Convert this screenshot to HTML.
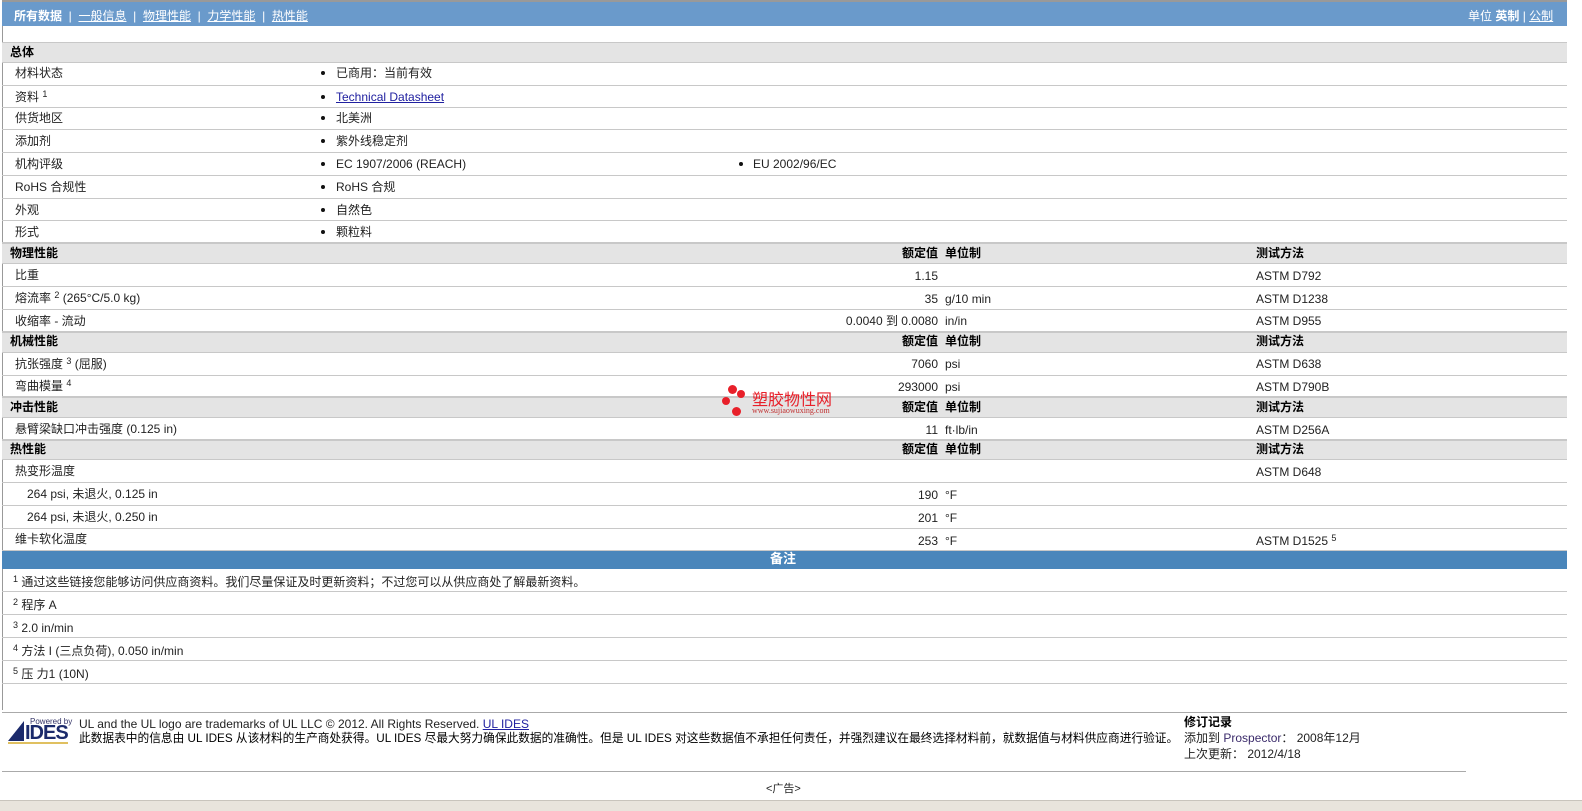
<!DOCTYPE html>
<html><head><meta charset="utf-8"><style>
*{margin:0;padding:0;box-sizing:border-box}
body{width:1582px;height:811px;background:#fff;font-family:"Liberation Sans","Noto Sans CJK SC",sans-serif;font-size:12px;color:#222;position:relative;overflow:hidden}
.a{position:absolute;white-space:nowrap}
.r{position:absolute;left:2px;width:1565px;border-bottom:1px solid #c8c8c8}
.g{background:#e4e4e4;border-top:1px solid #c8c8c8}
.b{font-weight:bold;color:#000}
.t{position:absolute;line-height:12px;white-space:nowrap}
sup{font-size:9px;position:relative;top:-4px;vertical-align:baseline;line-height:0}
a{color:#2020a0;text-decoration:underline}
.dot{position:absolute;width:4px;height:4px;border-radius:50%;background:#111}
</style></head><body>
<div class="a" style="left:2px;top:0;width:1565px;height:2px;background:#999"></div>
<div class="a" style="left:2px;top:2px;width:1565px;height:24px;background:#6a9acb"></div>
<div class="a" style="left:14px;top:7px;color:#fff;font-size:12px"><b>所有数据</b> &nbsp;| &nbsp;<u>一般信息</u> &nbsp;| &nbsp;<u>物理性能</u> &nbsp;| &nbsp;<u>力学性能</u> &nbsp;| &nbsp;<u>热性能</u></div>
<div class="a" style="left:1468px;top:7px;color:#fff">单位 <b>英制</b> | <u>公制</u></div>
<div class="a" style="left:2px;top:26px;width:1px;height:684px;background:#999"></div>

<div class="r g" style="top:42px;height:21px"></div><div class="t b" style="left:10px;top:46px">总体</div>

<div class="r" style="top:63px;height:23px"></div><div class="t" style="left:15px;top:67px">材料状态</div><div class="dot" style="left:321px;top:71px"></div><div class="t" style="left:336px;top:67px">已商用：当前有效</div>
<div class="r" style="top:86px;height:22px"></div><div class="t" style="left:15px;top:91px">资料 <sup>1</sup></div><div class="dot" style="left:321px;top:95px"></div><div class="t" style="left:336px;top:91px"><a>Technical Datasheet</a></div>
<div class="r" style="top:108px;height:22px"></div><div class="t" style="left:15px;top:112px">供货地区</div><div class="dot" style="left:321px;top:116px"></div><div class="t" style="left:336px;top:112px">北美洲</div>
<div class="r" style="top:130px;height:23px"></div><div class="t" style="left:15px;top:135px">添加剂</div><div class="dot" style="left:321px;top:139px"></div><div class="t" style="left:336px;top:135px">紫外线稳定剂</div>
<div class="r" style="top:153px;height:23px"></div><div class="t" style="left:15px;top:158px">机构评级</div><div class="dot" style="left:321px;top:162px"></div><div class="t" style="left:336px;top:158px">EC 1907/2006 (REACH)</div><div class="dot" style="left:739px;top:162px"></div><div class="t" style="left:753px;top:158px">EU 2002/96/EC</div>
<div class="r" style="top:176px;height:23px"></div><div class="t" style="left:15px;top:181px">RoHS 合规性</div><div class="dot" style="left:321px;top:185px"></div><div class="t" style="left:336px;top:181px">RoHS 合规</div>
<div class="r" style="top:199px;height:22px"></div><div class="t" style="left:15px;top:204px">外观</div><div class="dot" style="left:321px;top:208px"></div><div class="t" style="left:336px;top:204px">自然色</div>
<div class="r" style="top:221px;height:22px"></div><div class="t" style="left:15px;top:226px">形式</div><div class="dot" style="left:321px;top:230px"></div><div class="t" style="left:336px;top:226px">颗粒料</div>

<div class="r g" style="top:243px;height:21px"></div><div class="t b" style="left:10px;top:247px">物理性能</div><div class="t b" style="left:880px;top:247px;width:58px;text-align:right">额定值</div><div class="t b" style="left:945px;top:247px">单位制</div><div class="t b" style="left:1256px;top:247px">测试方法</div>
<div class="r" style="top:264px;height:23px"></div><div class="t" style="left:15px;top:269px">比重</div><div class="t" style="left:700px;top:270px;width:238px;text-align:right">1.15</div><div class="t" style="left:1256px;top:270px">ASTM D792</div>
<div class="r" style="top:287px;height:23px"></div><div class="t" style="left:15px;top:292px">熔流率 <sup>2</sup> (265°C/5.0 kg)</div><div class="t" style="left:700px;top:293px;width:238px;text-align:right">35</div><div class="t" style="left:945px;top:293px">g/10 min</div><div class="t" style="left:1256px;top:293px">ASTM D1238</div>
<div class="r" style="top:310px;height:22px"></div><div class="t" style="left:15px;top:315px">收缩率 - 流动</div><div class="t" style="left:700px;top:315px;width:238px;text-align:right">0.0040 到 0.0080</div><div class="t" style="left:945px;top:315px">in/in</div><div class="t" style="left:1256px;top:315px">ASTM D955</div>

<div class="r g" style="top:332px;height:21px"></div><div class="t b" style="left:10px;top:335px">机械性能</div><div class="t b" style="left:880px;top:335px;width:58px;text-align:right">额定值</div><div class="t b" style="left:945px;top:335px">单位制</div><div class="t b" style="left:1256px;top:335px">测试方法</div>
<div class="r" style="top:353px;height:23px"></div><div class="t" style="left:15px;top:358px">抗张强度 <sup>3</sup> (屈服)</div><div class="t" style="left:700px;top:358px;width:238px;text-align:right">7060</div><div class="t" style="left:945px;top:358px">psi</div><div class="t" style="left:1256px;top:358px">ASTM D638</div>
<div class="r" style="top:376px;height:21px"></div><div class="t" style="left:15px;top:380px">弯曲模量 <sup>4</sup></div><div class="t" style="left:700px;top:381px;width:238px;text-align:right">293000</div><div class="t" style="left:945px;top:381px">psi</div><div class="t" style="left:1256px;top:381px">ASTM D790B</div>

<div class="r g" style="top:397px;height:21px"></div><div class="t b" style="left:10px;top:401px">冲击性能</div><div class="t b" style="left:880px;top:401px;width:58px;text-align:right">额定值</div><div class="t b" style="left:945px;top:401px">单位制</div><div class="t b" style="left:1256px;top:401px">测试方法</div>
<div class="r" style="top:418px;height:22px"></div><div class="t" style="left:15px;top:423px">悬臂梁缺口冲击强度 (0.125 in)</div><div class="t" style="left:700px;top:424px;width:238px;text-align:right">11</div><div class="t" style="left:945px;top:424px">ft·lb/in</div><div class="t" style="left:1256px;top:424px">ASTM D256A</div>

<div class="r g" style="top:440px;height:20px"></div><div class="t b" style="left:10px;top:443px">热性能</div><div class="t b" style="left:880px;top:443px;width:58px;text-align:right">额定值</div><div class="t b" style="left:945px;top:443px">单位制</div><div class="t b" style="left:1256px;top:443px">测试方法</div>
<div class="r" style="top:460px;height:23px"></div><div class="t" style="left:15px;top:465px">热变形温度</div><div class="t" style="left:1256px;top:466px">ASTM D648</div>
<div class="r" style="top:483px;height:23px"></div><div class="t" style="left:27px;top:488px">264 psi, 未退火, 0.125 in</div><div class="t" style="left:700px;top:489px;width:238px;text-align:right">190</div><div class="t" style="left:945px;top:489px">°F</div>
<div class="r" style="top:506px;height:23px"></div><div class="t" style="left:27px;top:511px">264 psi, 未退火, 0.250 in</div><div class="t" style="left:700px;top:512px;width:238px;text-align:right">201</div><div class="t" style="left:945px;top:512px">°F</div>
<div class="r" style="top:529px;height:22px"></div><div class="t" style="left:15px;top:533px">维卡软化温度</div><div class="t" style="left:700px;top:535px;width:238px;text-align:right">253</div><div class="t" style="left:945px;top:535px">°F</div><div class="t" style="left:1256px;top:535px">ASTM D1525 <sup>5</sup></div>

<div class="a" style="left:2px;top:551px;width:1565px;height:18px;background:#4a86bb"></div><div class="t b" style="left:770px;top:553px;color:#fff;font-size:13px">备注</div>
<div class="r" style="top:569px;height:23px"></div><div class="t" style="left:13px;top:576px"><sup>1</sup> 通过这些链接您能够访问供应商资料。我们尽量保证及时更新资料；不过您可以从供应商处了解最新资料。</div>
<div class="r" style="top:592px;height:23px"></div><div class="t" style="left:13px;top:599px"><sup>2</sup> 程序 A</div>
<div class="r" style="top:615px;height:23px"></div><div class="t" style="left:13px;top:622px"><sup>3</sup> 2.0 in/min</div>
<div class="r" style="top:638px;height:23px"></div><div class="t" style="left:13px;top:645px"><sup>4</sup> 方法 I (三点负荷), 0.050 in/min</div>
<div class="r" style="top:661px;height:23px"></div><div class="t" style="left:13px;top:668px"><sup>5</sup> 压 力1 (10N)</div>

<div class="a" style="left:2px;top:712px;width:1565px;height:1px;background:#aaa"></div>
<div class="a" style="left:8px;top:717px;width:62px;height:28px">
<div class="a" style="left:22px;top:0;font-size:8px;color:#336">Powered by</div>
<div class="a" style="left:0;top:4px;width:0;height:0;border-left:16px solid transparent;border-bottom:20px solid #1b2a6b"></div>
<div class="a" style="left:17px;top:5px;font-size:20px;font-weight:bold;color:#1b2a6b;letter-spacing:-1px">IDES</div>
<div class="a" style="left:0;top:25px;width:60px;height:2px;background:#e0c060"></div>
</div>
<div class="t" style="left:79px;top:718px">UL and the UL logo are trademarks of UL LLC © 2012. All Rights Reserved. <a>UL IDES</a></div>
<div class="t" style="left:79px;top:732px;color:#000;transform:scaleX(0.975);transform-origin:0 0">此数据表中的信息由 UL IDES 从该材料的生产商处获得。UL IDES 尽最大努力确保此数据的准确性。但是 UL IDES 对这些数据值不承担任何责任，并强烈建议在最终选择材料前，就数据值与材料供应商进行验证。</div>
<div class="t b" style="left:1184px;top:716px">修订记录</div>
<div class="t" style="left:1184px;top:732px">添加到 <span style="color:#3a2a6a">Prospector</span>： 2008年12月</div>
<div class="t" style="left:1184px;top:748px">上次更新： 2012/4/18</div>
<div class="a" style="left:2px;top:771px;width:1464px;height:1px;background:#aaa"></div>
<div class="t" style="left:766px;top:783px;font-size:11px">&lt;广告&gt;</div>
<div class="a" style="left:0;top:800px;width:1582px;height:11px;background:#e8e4dc;border-top:1px solid #c8c4bc"></div>

<div class="a" style="left:722px;top:385px;width:130px;height:34px">
<div class="a" style="left:6px;top:0;width:9px;height:9px;border-radius:50%;background:#e8202a"></div>
<div class="a" style="left:15px;top:5px;width:8px;height:8px;border-radius:50%;background:#e8202a"></div>
<div class="a" style="left:0;top:12px;width:8px;height:8px;border-radius:50%;background:#e8202a"></div>
<div class="a" style="left:10px;top:22px;width:9px;height:9px;border-radius:50%;background:#e8202a"></div>
<div class="a" style="left:30px;top:1px;font-size:16px;color:#e8202a">塑胶物性网</div>
<div class="a" style="left:30px;top:21px;font-size:8px;color:#c03030;font-family:'Liberation Serif',serif">www.sujiaowuxing.com</div>
</div>
</body></html>
